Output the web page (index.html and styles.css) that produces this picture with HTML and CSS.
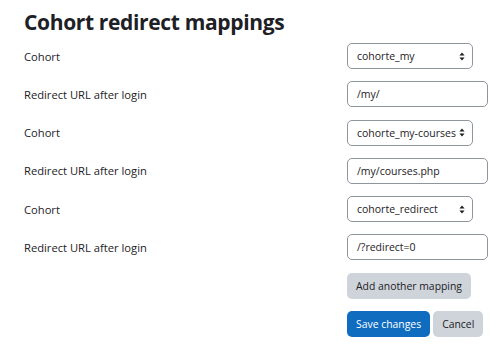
FILE: index.html
```html
<!DOCTYPE html>
<html>
<head>
<meta charset="utf-8">
<link rel="stylesheet" href="styles.css">
</head>
<body>
<div class="page">
  <h2 class="title">Cohort redirect mappings</h2>
  <form class="form">
    <div class="row">
      <label class="label">Cohort</label>
      <div class="select"><span class="value">cohorte_my</span><svg class="arrow" width="6" height="9" viewBox="0 0 6 9"><path d="M3 0.5 L5.6 3.6 H0.4 Z M3 8.5 L5.6 5.4 H0.4 Z" fill="#1d2125"/></svg></div>
    </div>
    <div class="row">
      <label class="label">Redirect URL after login</label>
      <div class="input">/my/</div>
    </div>
    <div class="row">
      <label class="label">Cohort</label>
      <div class="select"><span class="value">cohorte_my-courses</span><svg class="arrow" width="6" height="9" viewBox="0 0 6 9"><path d="M3 0.5 L5.6 3.6 H0.4 Z M3 8.5 L5.6 5.4 H0.4 Z" fill="#1d2125"/></svg></div>
    </div>
    <div class="row">
      <label class="label">Redirect URL after login</label>
      <div class="input">/my/courses.php</div>
    </div>
    <div class="row">
      <label class="label">Cohort</label>
      <div class="select"><span class="value">cohorte_redirect</span><svg class="arrow" width="6" height="9" viewBox="0 0 6 9"><path d="M3 0.5 L5.6 3.6 H0.4 Z M3 8.5 L5.6 5.4 H0.4 Z" fill="#1d2125"/></svg></div>
    </div>
    <div class="row">
      <label class="label">Redirect URL after login</label>
      <div class="input">/?redirect=0</div>
    </div>
    <div class="row">
      <span></span>
      <div class="buttons"><button type="button" class="btn btn-secondary">Add another mapping</button></div>
    </div>
    <div class="row">
      <span></span>
      <div class="buttons"><button type="button" class="btn btn-primary">Save changes</button><button type="button" class="btn btn-secondary">Cancel</button></div>
    </div>
  </form>
</div>
</body>
</html>
```
FILE: styles.css
```css
html, body {
  margin: 0;
  padding: 0;
  background: #ffffff;
}
body {
  font-family: "Open Sans", "Liberation Sans", sans-serif;
  color: #1d2125;
  font-size: 11px;
}
.page {
  padding: 7px 12px 0 24px;
}
.title {
  margin: 0 0 6px 0;
  font-size: 21px;
  letter-spacing: -0.35px;
  font-weight: 700;
  line-height: 30px;
}
.form {
  display: flex;
  flex-direction: column;
  gap: 12.3px;
}
.row {
  display: grid;
  grid-template-columns: 323px 141px;
  align-items: center;
  height: 26px;
}
.label {
  font-size: 11.2px;
}
.select, .input {
  box-sizing: border-box;
  height: 26px;
  border: 1px solid #8f959e;
  border-radius: 5px;
  display: flex;
  align-items: center;
  padding: 0 9px;
  font-size: 10.5px;
  background: #fff;
  white-space: nowrap;
}
.select {
  width: 126px;
  justify-content: space-between;
  padding-right: 7px;
}
.value {
  overflow: hidden;
}
.arrow {
  flex: none;
  margin-left: 2px;
}
.input {
  width: 141px;
}
.buttons {
  display: flex;
  gap: 3px;
  white-space: nowrap;
}
.btn {
  box-sizing: border-box;
  height: 26px;
  border: none;
  border-radius: 5px;
  padding: 0 9px;
  font-family: "Open Sans", "Liberation Sans", sans-serif;
  font-size: 10.4px;
  color: #1d2125;
}
.btn-secondary {
  background: #ced4da;
}
.btn-primary {
  background: #0f6cbf;
  color: #ffffff;
}
```
